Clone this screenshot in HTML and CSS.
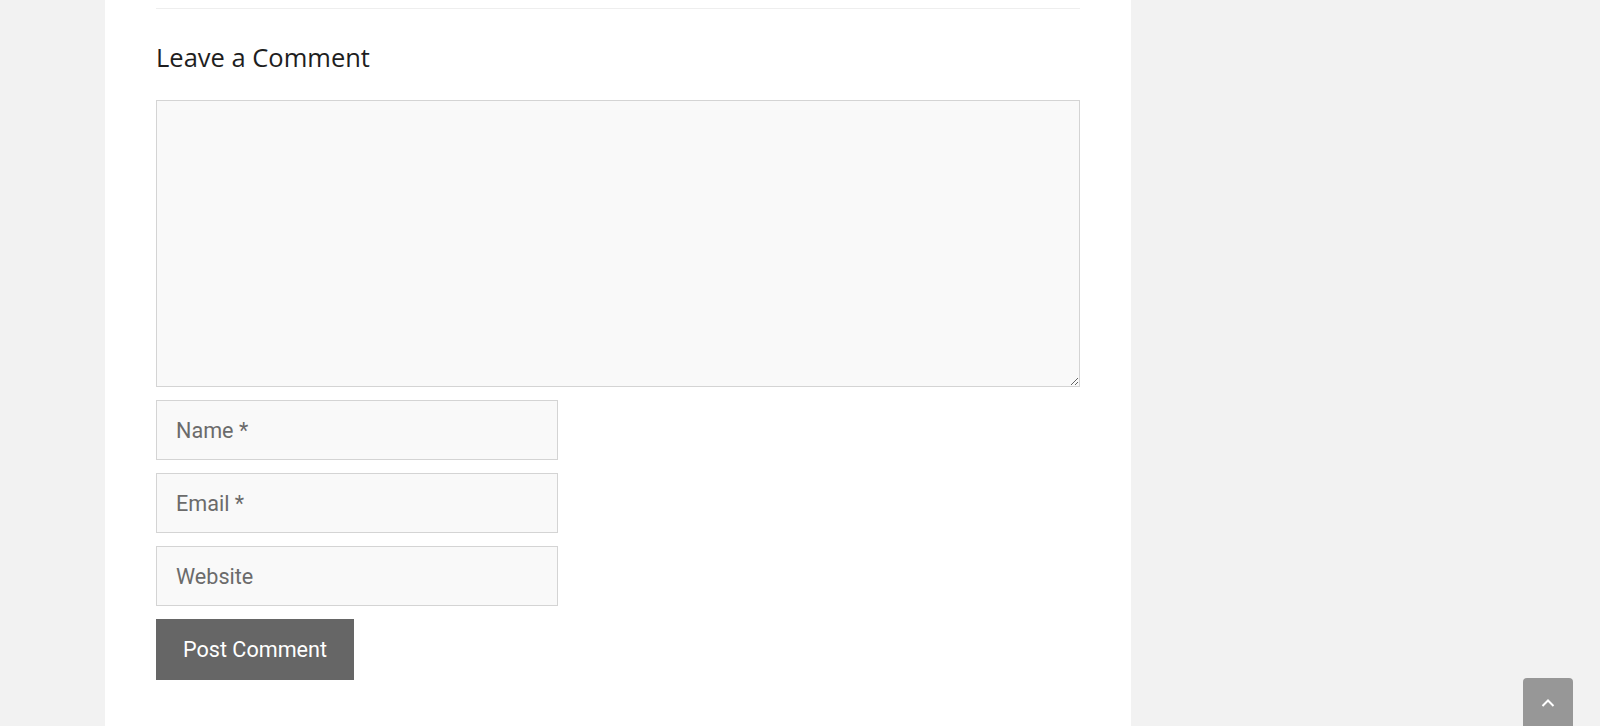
FILE: index.html
```html
<!DOCTYPE html>
<html lang="en">
<head>
    <meta charset="UTF-8">
    <meta name="viewport" content="width=device-width, initial-scale=1.0">
    <title>Leave a Comment</title>
    <link rel="stylesheet" href="styles.css">
</head>
<body>
    <div class="page">
        <div class="content">
            <hr class="separator">

            <div class="comment-respond">
                <h3 class="comment-title">Leave a Comment</h3>
                <form class="comment-form">
                    <textarea class="comment-text" rows="8"></textarea>
                    <input type="text" class="field" placeholder="Name *">
                    <input type="email" class="field" placeholder="Email *">
                    <input type="url" class="field" placeholder="Website">
                    <button type="submit" class="submit">Post Comment</button>
                </form>
            </div>
        </div>
    </div>

    <a href="#" class="scroll-top" aria-label="Scroll to top">
        <svg width="16" height="10" viewBox="0 0 16 10">
            <path d="M2.5 8 L8 2.5 L13.5 8" fill="none" stroke="#fff" stroke-width="2"/>
        </svg>
    </a>
</body>
</html>
```

FILE: styles.css
```css
body {
    margin: 0;
    padding: 0;
    background-color: #f2f2f2;
    font-family: Roboto, "Liberation Sans", sans-serif;
}

.page {
    width: 1026px;
    margin-left: 105px;
    min-height: 726px;
    background-color: #fff;
}

.content {
    padding: 8px 51px 0;
}

.separator {
    margin: 0;
    border: none;
    border-top: 1px solid #eeeeee;
}

.comment-title {
    margin: 30px 0 25px;
    font-family: "Open Sans", sans-serif;
    font-size: 25.5px;
    font-weight: 400;
    line-height: 36px;
    color: #1e1e1e;
}

.comment-form {
    display: flex;
    flex-direction: column;
    align-items: flex-start;
    gap: 13px;
}

.comment-text {
    box-sizing: border-box;
    width: 924px;
    height: 287px;
    margin: 0;
    padding: 10px 20px;
    background-color: #f9f9f9;
    border: 1px solid #d4d4d4;
    border-radius: 0;
    font-family: Roboto, sans-serif;
    font-size: 21.6px;
}

.field {
    box-sizing: border-box;
    width: 402px;
    height: 60px;
    margin: 0;
    padding: 1px 19px 0;
    background-color: #f9f9f9;
    border: 1px solid #d4d4d4;
    border-radius: 0;
    font-family: Roboto, sans-serif;
    font-size: 21.6px;
    color: #555;
}

.field::placeholder {
    color: #6b6b6b;
}

.submit {
    box-sizing: border-box;
    height: 61px;
    padding: 0 27px;
    background-color: #666666;
    color: #fff;
    border: none;
    border-radius: 0;
    font-family: Roboto, sans-serif;
    font-size: 21.6px;
    cursor: pointer;
}

.scroll-top {
    position: fixed;
    left: 1523px;
    top: 678px;
    width: 50px;
    height: 48px;
    display: flex;
    justify-content: center;
    padding-top: 20px;
    box-sizing: border-box;
    background-color: #979797;
    border-radius: 4px 4px 0 0;
}
```
